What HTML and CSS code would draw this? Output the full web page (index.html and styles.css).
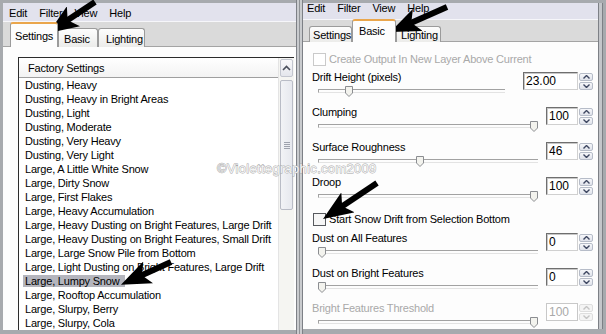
FILE: index.html
```html
<!DOCTYPE html>
<html lang="en">
<head>
  <meta charset="UTF-8">
  <title>Snow Drift - Settings</title>
  <link rel="stylesheet" href="styles.css">
</head>
<body>

  <div class="desk">

    <!-- Fenetre de gauche : onglet Settings -->
    <div class="win win-left">
      <div class="menubar">
        <span>Edit</span><span>Filter</span><span>View</span><span>Help</span>
      </div>
      <div class="tabs">
        <div class="tab active">Settings</div>
        <div class="tab">Basic</div>
        <div class="tab">Lighting</div>
      </div>
      <div class="pane">
        <div class="listbox">
          <div class="list">
            <div class="list-head">Factory Settings</div>
            <ul class="items">
              <li><span>Dusting, Heavy</span></li>
              <li><span>Dusting, Heavy in Bright Areas</span></li>
              <li><span>Dusting, Light</span></li>
              <li><span>Dusting, Moderate</span></li>
              <li><span>Dusting, Very Heavy</span></li>
              <li><span>Dusting, Very Light</span></li>
              <li><span>Large, A Little White Snow</span></li>
              <li><span>Large, Dirty Snow</span></li>
              <li><span>Large, First Flakes</span></li>
              <li><span>Large, Heavy Accumulation</span></li>
              <li><span>Large, Heavy Dusting on Bright Features, Large Drift</span></li>
              <li><span>Large, Heavy Dusting on Bright Features, Small Drift</span></li>
              <li><span>Large, Large Snow Pile from Bottom</span></li>
              <li><span>Large, Light Dusting on Bright Features, Large Drift</span></li>
              <li class="selected"><span>Large, Lumpy Snow</span></li>
              <li><span>Large, Rooftop Accumulation</span></li>
              <li><span>Large, Slurpy, Berry</span></li>
              <li><span>Large, Slurpy, Cola</span></li>
            </ul>
          </div>
          <div class="scrollbar">
            <div class="sb-btn">
              <svg width="9" height="6" viewBox="0 0 9 6"><path d="M1 5 L4.5 1.5 L8 5" /></svg>
            </div>
            <div class="sb-thumb"><i></i><i></i><i></i><i></i></div>
            <div class="sb-track"></div>
            <div class="sb-btn"></div>
          </div>
        </div>
      </div>
    </div>

    <div class="divider"></div>

    <!-- Fenetre de droite : onglet Basic -->
    <div class="win win-right">
      <div class="menubar">
        <span>Edit</span><span>Filter</span><span>View</span><span>Help</span>
      </div>
      <div class="tabs">
        <div class="tab">Settings</div>
        <div class="tab active">Basic</div>
        <div class="tab">Lighting</div>
      </div>
      <div class="pane form">

        <label class="check disabled"><i class="box"></i>Create Output In New Layer Above Current</label>

        <div class="ctrl">
          <div class="ctrl-main">
            <div class="ctrl-label">Drift Height (pixels)</div>
            <div class="slider slider-short"><div class="thumb" style="--v:15"><svg width="8" height="11" viewBox="0 0 8 11"><path d="M0.5 0.5 H7.5 V7 L4 10.5 L0.5 7 Z" /></svg></div></div>
          </div>
          <div class="field"><div class="num num-wide">23.00</div><div class="spin"><b><svg width="7" height="4" viewBox="0 0 7 4"><path d="M0.5 3.5 L3.5 0.5 L6.5 3.5" /></svg></b><b><svg width="7" height="4" viewBox="0 0 7 4"><path d="M0.5 0.5 L3.5 3.5 L6.5 0.5" /></svg></b></div></div>
        </div>

        <div class="ctrl">
          <div class="ctrl-main">
            <div class="ctrl-label">Clumping</div>
            <div class="slider"><div class="thumb" style="--v:100"><svg width="8" height="11" viewBox="0 0 8 11"><path d="M0.5 0.5 H7.5 V7 L4 10.5 L0.5 7 Z" /></svg></div></div>
          </div>
          <div class="field"><div class="num">100</div><div class="spin"><b><svg width="7" height="4" viewBox="0 0 7 4"><path d="M0.5 3.5 L3.5 0.5 L6.5 3.5" /></svg></b><b><svg width="7" height="4" viewBox="0 0 7 4"><path d="M0.5 0.5 L3.5 3.5 L6.5 0.5" /></svg></b></div></div>
        </div>

        <div class="ctrl">
          <div class="ctrl-main">
            <div class="ctrl-label">Surface Roughness</div>
            <div class="slider"><div class="thumb" style="--v:46"><svg width="8" height="11" viewBox="0 0 8 11"><path d="M0.5 0.5 H7.5 V7 L4 10.5 L0.5 7 Z" /></svg></div></div>
          </div>
          <div class="field"><div class="num">46</div><div class="spin"><b><svg width="7" height="4" viewBox="0 0 7 4"><path d="M0.5 3.5 L3.5 0.5 L6.5 3.5" /></svg></b><b><svg width="7" height="4" viewBox="0 0 7 4"><path d="M0.5 0.5 L3.5 3.5 L6.5 0.5" /></svg></b></div></div>
        </div>

        <div class="ctrl">
          <div class="ctrl-main">
            <div class="ctrl-label">Droop</div>
            <div class="slider"><div class="thumb" style="--v:100"><svg width="8" height="11" viewBox="0 0 8 11"><path d="M0.5 0.5 H7.5 V7 L4 10.5 L0.5 7 Z" /></svg></div></div>
          </div>
          <div class="field"><div class="num">100</div><div class="spin"><b><svg width="7" height="4" viewBox="0 0 7 4"><path d="M0.5 3.5 L3.5 0.5 L6.5 3.5" /></svg></b><b><svg width="7" height="4" viewBox="0 0 7 4"><path d="M0.5 0.5 L3.5 3.5 L6.5 0.5" /></svg></b></div></div>
        </div>

        <label class="check check-snow"><i class="box"></i>Start Snow Drift from Selection Bottom</label>

        <div class="ctrl">
          <div class="ctrl-main">
            <div class="ctrl-label">Dust on All Features</div>
            <div class="slider"><div class="thumb" style="--v:0"><svg width="8" height="11" viewBox="0 0 8 11"><path d="M0.5 0.5 H7.5 V7 L4 10.5 L0.5 7 Z" /></svg></div></div>
          </div>
          <div class="field"><div class="num">0</div><div class="spin"><b><svg width="7" height="4" viewBox="0 0 7 4"><path d="M0.5 3.5 L3.5 0.5 L6.5 3.5" /></svg></b><b><svg width="7" height="4" viewBox="0 0 7 4"><path d="M0.5 0.5 L3.5 3.5 L6.5 0.5" /></svg></b></div></div>
        </div>

        <div class="ctrl">
          <div class="ctrl-main">
            <div class="ctrl-label">Dust on Bright Features</div>
            <div class="slider"><div class="thumb" style="--v:0"><svg width="8" height="11" viewBox="0 0 8 11"><path d="M0.5 0.5 H7.5 V7 L4 10.5 L0.5 7 Z" /></svg></div></div>
          </div>
          <div class="field"><div class="num">0</div><div class="spin"><b><svg width="7" height="4" viewBox="0 0 7 4"><path d="M0.5 3.5 L3.5 0.5 L6.5 3.5" /></svg></b><b><svg width="7" height="4" viewBox="0 0 7 4"><path d="M0.5 0.5 L3.5 3.5 L6.5 0.5" /></svg></b></div></div>
        </div>

        <div class="ctrl disabled">
          <div class="ctrl-main">
            <div class="ctrl-label">Bright Features Threshold</div>
            <div class="slider"><div class="thumb" style="--v:100"><svg width="8" height="11" viewBox="0 0 8 11"><path d="M0.5 0.5 H7.5 V7 L4 10.5 L0.5 7 Z" /></svg></div></div>
          </div>
          <div class="field"><div class="num">100</div><div class="spin"><b><svg width="7" height="4" viewBox="0 0 7 4"><path d="M0.5 3.5 L3.5 0.5 L6.5 3.5" /></svg></b><b><svg width="7" height="4" viewBox="0 0 7 4"><path d="M0.5 0.5 L3.5 3.5 L6.5 0.5" /></svg></b></div></div>
        </div>

      </div>
    </div>

  </div>

  <!-- Filigrane et fleches dessinees par-dessus la capture -->
  <div class="watermark">©Violettegraphic.com2009</div>

  <svg class="arrows" width="606" height="334" viewBox="0 0 606 334">
    <defs>
      <marker id="head" markerUnits="userSpaceOnUse" markerWidth="30" markerHeight="24" viewBox="0 0 30 24" refX="15" refY="12" orient="auto">
        <path d="M0 0 L30 12 L0 24 L7 12 Z" />
      </marker>
    </defs>
    <line x1="95" y1="2" x2="61" y2="24.6" />
    <line x1="447" y1="7" x2="404" y2="26" />
    <line x1="171" y1="262" x2="134.6" y2="278.6" />
    <line x1="377" y1="183" x2="335.5" y2="210.7" />
  </svg>

</body>
</html>
```

FILE: styles.css
```css
:root {
  --frame: #a7aaae;
  --menu-bg: #e2e2ed;
  --strip-bg: #dadada;
  --pane-bg: #fdfdfd;
  --text: #000;
  --text-disabled: #a9a9a9;
  --font-main: "Liberation Sans", Arial, sans-serif;
}

* {
  box-sizing: border-box;
}

body {
  margin: 0;
  width: 606px;
  height: 334px;
  overflow: hidden;
  position: relative;
  background: var(--frame);
  font-family: var(--font-main);
  font-size: 11px;
  letter-spacing: -0.2px;
  color: var(--text);
}

.desk {
  display: flex;
  align-items: flex-start;
  height: 334px;
}

.win {
  display: flex;
  flex-direction: column;
  background: var(--pane-bg);
  overflow: hidden;
}

.win-left {
  margin: 3px 0 0 3px;
  width: 293px;
  height: 327px;
}

.win-right {
  margin-top: 3px;
  width: 295px;
  height: 326px;
  box-shadow: 1px 0 0 #7d8086, 4px 0 0 #c4c6ca, 5px 0 0 #7d8086;
}

/* double trait entre les deux captures */
.divider {
  width: 7px;
  height: 334px;
  border-left: 1px solid #7d8086;
  border-right: 1px solid #7d8086;
  background: linear-gradient(90deg, #c9cbce 0 2px, #8f9296 2px 3px, #c9cbce 3px);
}

/* Barre de menu */
.menubar {
  flex-shrink: 0;
  display: flex;
  background: var(--menu-bg);
  border-bottom: 1px solid #f6f6fa;
}

.menubar span {
  padding: 0 6px;
}

.win-left .menubar {
  height: 19px;
  padding-top: 4px;
  line-height: 13px;
}

.win-right .menubar {
  height: 17px;
  padding-top: 0;
  line-height: 11px;
}

.win-right .menubar span {
  padding: 0 5px 0 4px;
}

.win-right .menubar span + span {
  padding-left: 7px;
}

/* Onglets */
.tabs {
  flex-shrink: 0;
  display: flex;
  align-items: flex-end;
  background: var(--strip-bg);
  border-bottom: 1px solid #a4a4a4;
}

.win-left .tabs {
  height: 25px;
  padding-left: 7px;
}

.win-right .tabs {
  height: 22px;
  padding-left: 6px;
}

.tab {
  height: 19px;
  padding: 4px 0 0 4px;
  border: 1px solid #9b9b9b;
  border-bottom: none;
  border-radius: 3px 3px 0 0;
  background: linear-gradient(#fdfdfd, #ececea);
  margin-bottom: -1px;
}

.win-left .tab:nth-child(1) { width: 48px; }
.win-left .tab:nth-child(2) { width: 40px; padding-left: 5px; }
.win-left .tab:nth-child(3) { width: 47px; padding-left: 7px; }

.win-right .tab { height: 16px; padding-top: 2px; }
.win-right .tab:nth-child(1) { width: 43px; padding-left: 3px; }
.win-right .tab:nth-child(2) { width: 44px; padding-left: 6px; }
.win-right .tab:nth-child(3) { width: 45px; padding-left: 4px; }

.tab.active {
  height: 25px;
  padding-top: 6px;
  background: var(--pane-bg);
  border-top: 2px solid #eaa64c;
  position: relative;
  z-index: 1;
}

.win-right .tab.active {
  height: 23px;
  padding-top: 4px;
}

.pane {
  flex: 1;
  min-height: 0;
  overflow: hidden;
  background: var(--pane-bg);
}

/* Liste des reglages usine */
.win-left .pane {
  padding: 10px 2px 0 15px;
}

.listbox {
  display: flex;
  height: 300px;
  border-top: 1px solid #2c2c2c;
  border-left: 1px solid #2c2c2c;
}

.list {
  flex: 1;
  background: #fff;
}

.list-head {
  height: 20px;
  padding: 4px 0 0 9px;
  border-bottom: 1px solid #9f9f9f;
  background: linear-gradient(#fff, #f3f3f3);
}

.items {
  list-style: none;
  margin: 0;
  padding: 0 0 0 4px;
}

.items li {
  height: 14px;
  line-height: 14px;
  white-space: nowrap;
}

.items span {
  padding: 0 2px;
}

.items .selected span {
  background: #b4b5bd;
  padding-right: 6px;
}

.scrollbar {
  width: 16px;
  display: flex;
  flex-direction: column;
  background: #f5f5f2;
  border-left: 1px solid #e4e4e4;
}

.sb-btn {
  height: 18px;
  margin: 1px;
  border: 1px solid #c3c6cf;
  border-radius: 2px;
  background: linear-gradient(#f9f9fb, #e4e6ec);
  display: flex;
  align-items: center;
  justify-content: center;
}

.sb-btn path {
  fill: none;
  stroke: #4a4f5c;
  stroke-width: 1.6;
}

.sb-thumb {
  height: 130px;
  margin: 2px 1px 0;
  border: 1px solid #b9bcc6;
  border-radius: 2px;
  background: linear-gradient(90deg, #f2f3f6, #e6e8ee);
  display: flex;
  flex-direction: column;
  align-items: center;
  justify-content: center;
  gap: 1px;
}

.sb-thumb i {
  width: 6px;
  height: 1px;
  background: #9ea2ad;
}

.sb-track {
  flex: 1;
}

/* Formulaire de l'onglet Basic */
.form {
  padding: 8px 5px 0 9px;
}

.check {
  display: flex;
  align-items: center;
  height: 18px;
  gap: 3px;
}

.check .box {
  width: 13px;
  height: 13px;
  margin-left: 1px;
  border: 1px solid #57595e;
  background: #f6f6f6;
}

.check.disabled {
  color: var(--text-disabled);
}

.check.disabled .box {
  border-color: #cacaca;
  background: #fff;
}

.check + .ctrl {
  margin-top: 2px;
}

.check-snow {
  margin-bottom: 3px;
}

.ctrl {
  display: flex;
  height: 35px;
}

.ctrl-main {
  flex: 1;
}

.ctrl-label {
  height: 14px;
  line-height: 14px;
}

.slider {
  position: relative;
  height: 12px;
  margin: 0 0 0 6px;
}

.slider::before {
  content: "";
  position: absolute;
  left: 0;
  right: 0;
  top: 5px;
  height: 2px;
  border-top: 1px solid #a2a2a2;
  border-bottom: 1px solid #e3e3e3;
  border-left: 1px solid #a2a2a2;
}

.slider-short {
  margin-right: 10px;
}

.thumb {
  position: absolute;
  top: 2px;
  left: calc((100% - 8px) * var(--v) / 100);
  width: 8px;
  height: 11px;
}

.thumb svg {
  display: block;
}

.thumb path {
  fill: #f3f3ee;
  stroke: #8b8d91;
}

.field {
  display: flex;
  gap: 1px;
  margin: 2px 0 0 8px;
  height: 18px;
}

.num {
  width: 32px;
  height: 18px;
  padding: 1px 0 0 2px;
  border: 1px solid;
  border-color: #6f6f6f #d0d0d0 #d0d0d0 #6f6f6f;
  box-shadow: inset 1px 1px 0 #c8c8c8;
  background: #fff;
  font-size: 12px;
  letter-spacing: 0;
  line-height: 15px;
}

.num-wide {
  width: 55px;
}

.spin {
  width: 14px;
  display: flex;
  flex-direction: column;
  gap: 1px;
  padding-top: 1px;
}

.spin b {
  height: 8px;
  border: 1px solid #b6bcc8;
  border-radius: 2px;
  background: linear-gradient(#f6f7fa, #dfe2ea);
  display: flex;
  align-items: center;
  justify-content: center;
}

.spin svg {
  display: block;
}

.spin path {
  fill: none;
  stroke: #3d4660;
  stroke-width: 1.4;
}

.ctrl.disabled .ctrl-label,
.ctrl.disabled .num {
  color: var(--text-disabled);
}

.ctrl.disabled .num {
  border-color: #c8c8c8;
  box-shadow: none;
}

.ctrl.disabled .spin b {
  border-color: #dedede;
  background: #f4f4f4;
}

.ctrl.disabled .spin path {
  stroke: #c4c4c4;
}

/* Filigrane */
.watermark {
  position: absolute;
  left: 217px;
  top: 161px;
  font-size: 13px;
  color: #f4f4f4;
  -webkit-text-stroke: 0.8px #a5a5a5;
  paint-order: stroke fill;
  letter-spacing: 0.3px;
}

.arrows {
  position: absolute;
  left: 0;
  top: 0;
  pointer-events: none;
}

.arrows line {
  stroke: #000;
  stroke-width: 6;
  marker-end: url(#head);
}
```
